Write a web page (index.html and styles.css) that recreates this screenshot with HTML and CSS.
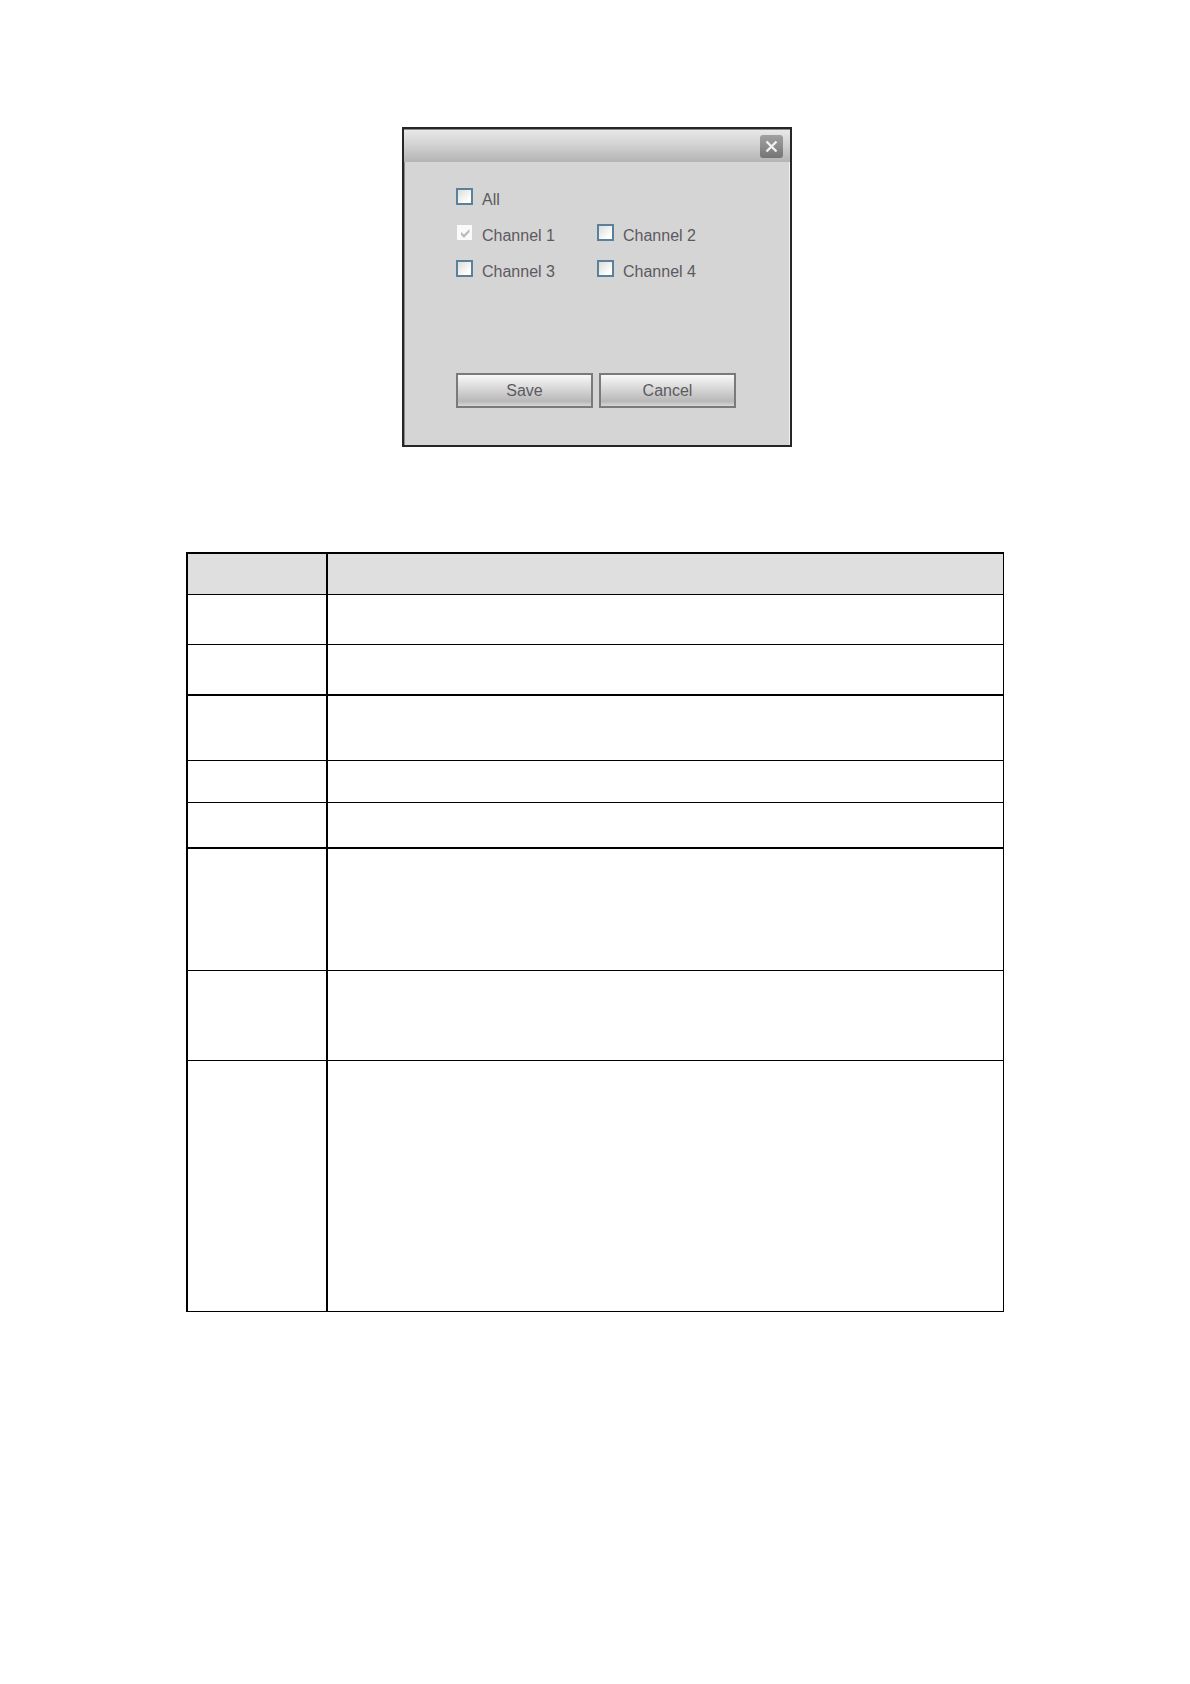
FILE: index.html
```html
<!DOCTYPE html>
<html lang="en">
<head>
<meta charset="utf-8">
<title>Channel copy</title>
<link rel="stylesheet" href="styles.css">
</head>
<body>
<main class="page">
  <section class="figure">
    <form class="dialog">
      <header class="dialog-bar">
        <button type="button" class="close" aria-label="Close">
          <svg viewBox="0 0 23 23" width="23" height="23" aria-hidden="true"><path d="M6.5 6.5l10 10M16.5 6.5l-10 10" stroke="#f0f0f0" stroke-width="2.4" fill="none"/></svg>
        </button>
      </header>
      <div class="dialog-body">
        <div class="options">
          <label class="option option-all"><input type="checkbox" class="check"><span>All</span></label>
          <label class="option"><input type="checkbox" class="check" checked disabled><span>Channel 1</span></label>
          <label class="option"><input type="checkbox" class="check"><span>Channel 2</span></label>
          <label class="option"><input type="checkbox" class="check"><span>Channel 3</span></label>
          <label class="option"><input type="checkbox" class="check"><span>Channel 4</span></label>
        </div>
        <div class="actions">
          <button type="button" class="button">Save</button>
          <button type="button" class="button">Cancel</button>
        </div>
      </div>
    </form>
  </section>
  <table class="grid">
    <colgroup><col class="col-name"><col></colgroup>
    <thead>
      <tr class="row-head"><th></th><th></th></tr>
    </thead>
    <tbody>
      <tr class="row-medium"><td></td><td></td></tr>
      <tr class="row-medium thick"><td></td><td></td></tr>
      <tr class="row-double"><td></td><td></td></tr>
      <tr class="row-single"><td></td><td></td></tr>
      <tr class="row-single-tall thick"><td></td><td></td></tr>
      <tr class="row-four"><td></td><td></td></tr>
      <tr class="row-three"><td></td><td></td></tr>
      <tr class="row-long"><td></td><td></td></tr>
    </tbody>
  </table>
</main>
</body>
</html>
```

FILE: styles.css
```css
* {
  box-sizing: border-box;
}

body {
  margin: 0;
  background: #fff;
  color: #5c5a60;
  font: 16px/18px "Liberation Sans", Arial, sans-serif;
}

.page {
  max-width: 818px;
  margin: 0 auto;
  padding: 127px 0 120px;
}

.figure {
  display: flex;
  justify-content: center;
  padding-left: 4px;
  margin-bottom: 105px;
}

.dialog {
  width: 390px;
  border: 2px solid #262626;
  background: #d5d5d5;
  box-shadow: inset 1px 1px #8c8c8c, inset -1px 0 #f0f0f0;
}

.dialog-bar {
  display: flex;
  justify-content: flex-end;
  align-items: center;
  height: 33px;
  padding-right: 7px;
  border-top: 1px solid #8a8a8a;
  background: linear-gradient(#e8e8e8, #d0d0d0 50%, #b4b4b4);
}

.close {
  display: flex;
  padding: 0;
  border: 0;
  border-radius: 3px;
  background: linear-gradient(#a0a0a0, #8c8c8c 50%, #747474);
}

.dialog-body {
  padding: 26px 52px 37px;
}

.options {
  display: grid;
  grid-template-columns: 141px 1fr;
  grid-auto-rows: 36px;
  margin-bottom: 77px;
}

.option {
  display: flex;
  align-items: baseline;
  align-self: start;
  gap: 9px;
  white-space: nowrap;
}

.option-all {
  grid-column: 1 / -1;
}

.check {
  appearance: none;
  flex: none;
  width: 17px;
  height: 17px;
  margin: 0;
  border: 2px solid #5a809c;
  background: linear-gradient(135deg, #dcdcd8, #fff 80%);
}

.check:disabled {
  border: 1px solid #d5d5d5;
  background: #fafafa url("data:image/svg+xml,%3Csvg xmlns='http://www.w3.org/2000/svg' viewBox='0 0 14 14'%3E%3Cpath d='M3 6v3l3 3 5.500-6V3L6 8.500z' fill='%23bbb'/%3E%3C/svg%3E") center / 14px 14px no-repeat;
}

.actions {
  display: flex;
  gap: 6px;
}

.button {
  width: 137px;
  height: 35px;
  padding: 0;
  border: 2px solid #7a7a7a;
  background: linear-gradient(#f8f8f8, #dedede 35%, #b8b8b8 85%, #d8d8d8);
  color: inherit;
  font: inherit;
}

.grid {
  width: 100%;
  table-layout: fixed;
  border-collapse: separate;
  border-spacing: 0;
  border-top: 2px solid #000;
}

.col-name {
  width: 140px;
}

.grid th,
.grid td {
  padding: 0;
  border-left: 2px solid #000;
  border-bottom: 1px solid #000;
}

.grid th {
  background: #dfdfdf;
}

.grid th:last-child,
.grid td:last-child {
  border-right: 1px solid #000;
}

.grid .thick td {
  border-bottom-width: 2px;
}

.row-head {
  height: 41px;
}

.row-medium {
  height: 50px;
}

.row-medium.thick {
  height: 51px;
}

.row-double {
  height: 65px;
}

.row-single {
  height: 42px;
}

.row-single-tall {
  height: 46px;
}

.row-four {
  height: 122px;
}

.row-three {
  height: 90px;
}

.row-long {
  height: 251px;
}
```
